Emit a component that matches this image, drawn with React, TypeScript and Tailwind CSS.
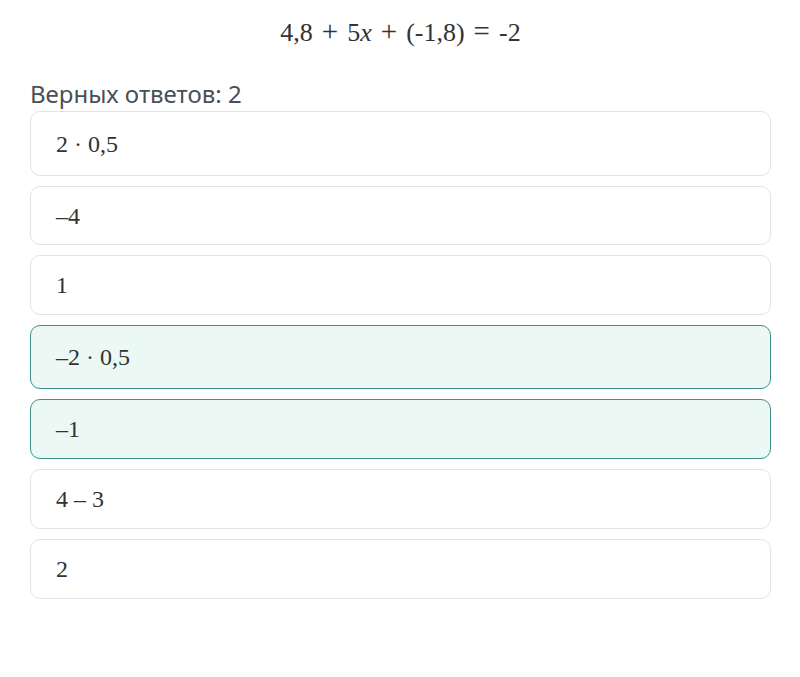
import React from "react";

const options: { text: string; h: string; selected?: boolean }[] = [
  { text: "2 · 0,5", h: "h-[65px]" },
  { text: "–4", h: "h-[59px]" },
  { text: "1", h: "h-[60px]" },
  { text: "–2 · 0,5", h: "h-[64px]", selected: true },
  { text: "–1", h: "h-[60px]", selected: true },
  { text: "4 – 3", h: "h-[60px]" },
  { text: "2", h: "h-[60px]" },
];

export default function App() {
  return (
    <div className="w-[800px] h-[677px] bg-white pl-[30px] pt-[13px]">
      <div className="w-[741px] h-[36px] flex justify-center items-baseline text-[26px] leading-[36px] text-[#333] font-['Liberation_Serif',serif]">
        <span>4,8</span>
        <span className="mx-[9px] text-[29px] leading-[36px]">+</span>
        <span>
          5<i>x</i>
        </span>
        <span className="mx-[9px] text-[29px] leading-[36px]">+</span>
        <span>(-1,8)</span>
        <span className="mx-[9px] text-[29px] leading-[36px]">=</span>
        <span>-2</span>
      </div>
      <div className="mt-[30px] text-[24px] leading-[30px] text-[#4a4f55] font-['Noto_Sans','Open_Sans',sans-serif]">
        Верных ответов: 2
      </div>
      <div className="mt-[2px] w-[741px] flex flex-col gap-[10px]">
        {options.map((o, i) => (
          <div
            key={i}
            className={
              "flex items-center rounded-[10px] border px-[25px] text-[24px] text-[#333] font-['Liberation_Serif',serif] " +
              o.h +
              (o.selected
                ? " border-[#3d8f8a] bg-[#ebf8f3]"
                : " border-[#e3e3e3] bg-white")
            }
          >
            {o.text}
          </div>
        ))}
      </div>
    </div>
  );
}
